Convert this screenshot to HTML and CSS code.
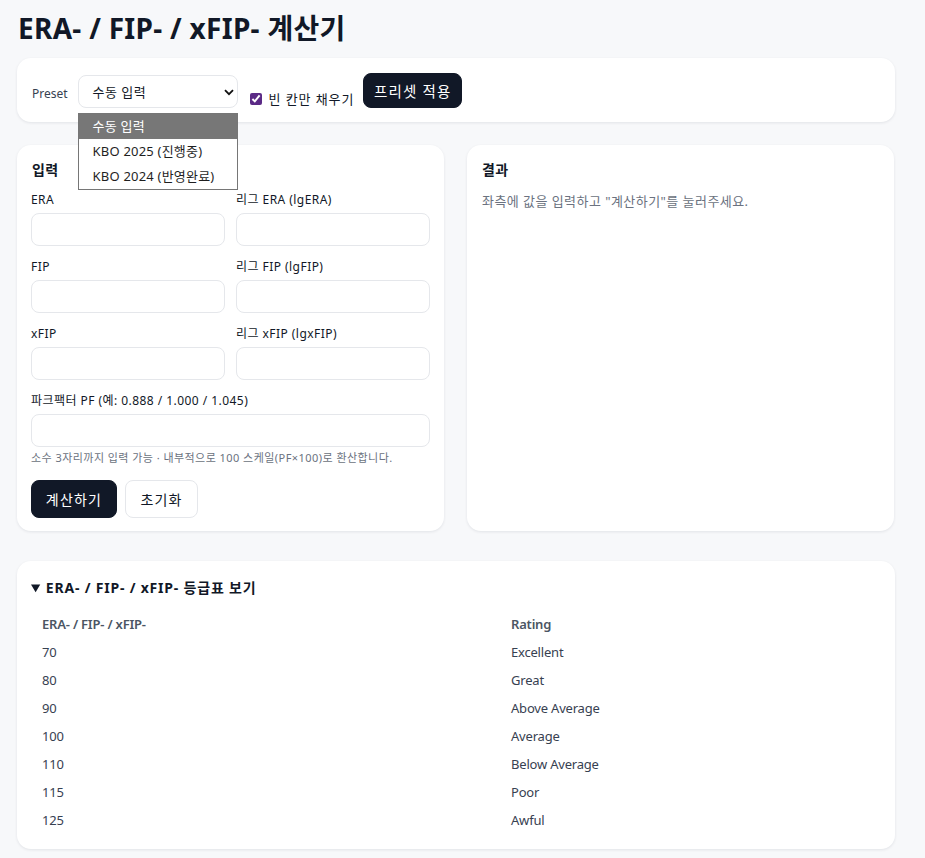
FILE: index.html
```html
<!DOCTYPE html>
<html lang="ko">
<head>
<meta charset="utf-8">
<title>ERA- / FIP- / xFIP- 계산기</title>
<link rel="stylesheet" href="styles.css">
</head>
<body>
<div class="page">
  <h1 class="title">ERA- / FIP- / xFIP- 계산기</h1>

  <div class="card preset-card">
    <span class="preset-label">Preset</span>
    <div class="select-wrap">
      <div class="select">
        <span>수동 입력</span>
        <svg class="chev" width="10" height="7" viewBox="0 0 10 7"><path d="M1 1.2 L5 5.2 L9 1.2" fill="none" stroke="#111" stroke-width="1.8"/></svg>
      </div>
      <ul class="dropdown">
        <li class="active">수동 입력</li>
        <li>KBO 2025 (진행중)</li>
        <li>KBO 2024 (반영완료)</li>
      </ul>
    </div>
    <label class="check-label"><input type="checkbox" class="check" checked> 빈 칸만 채우기</label>
    <button class="btn btn-dark btn-preset">프리셋 적용</button>
  </div>

  <div class="main-grid">
    <div class="card panel">
      <h2 class="panel-title">입력</h2>
      <div class="field-grid">
        <div class="field"><label class="field-label">ERA</label><input class="input" type="text"></div>
        <div class="field"><label class="field-label">리그 ERA (lgERA)</label><input class="input" type="text"></div>
        <div class="field"><label class="field-label">FIP</label><input class="input" type="text"></div>
        <div class="field"><label class="field-label">리그 FIP (lgFIP)</label><input class="input" type="text"></div>
        <div class="field"><label class="field-label">xFIP</label><input class="input" type="text"></div>
        <div class="field"><label class="field-label">리그 xFIP (lgxFIP)</label><input class="input" type="text"></div>
        <div class="field field-full"><label class="field-label">파크팩터 PF (예: 0.888 / 1.000 / 1.045)</label><input class="input" type="text"></div>
      </div>
      <p class="hint">소수 3자리까지 입력 가능 · 내부적으로 100 스케일(PF×100)로 환산합니다.</p>
      <div class="actions">
        <button class="btn btn-dark btn-calc">계산하기</button>
        <button class="btn btn-light btn-reset">초기화</button>
      </div>
    </div>
    <div class="card panel">
      <h2 class="panel-title">결과</h2>
      <p class="result-text">좌측에 값을 입력하고 "계산하기"를 눌러주세요.</p>
    </div>
  </div>

  <details class="card grade-card" open>
    <summary class="grade-summary">ERA- / FIP- / xFIP- 등급표 보기</summary>
    <table class="grade-table">
      <thead>
        <tr><th class="col-a">ERA- / FIP- / xFIP-</th><th>Rating</th></tr>
      </thead>
      <tbody>
        <tr><td>70</td><td>Excellent</td></tr>
        <tr><td>80</td><td>Great</td></tr>
        <tr><td>90</td><td>Above Average</td></tr>
        <tr><td>100</td><td>Average</td></tr>
        <tr><td>110</td><td>Below Average</td></tr>
        <tr><td>115</td><td>Poor</td></tr>
        <tr><td>125</td><td>Awful</td></tr>
      </tbody>
    </table>
  </details>
</div>
</body>
</html>
```

FILE: styles.css
```css
* { box-sizing: border-box; }
html, body { margin: 0; padding: 0; }
body {
  background: #f7f8fa;
  font-family: "Noto Sans", "Noto Sans CJK KR", sans-serif;
  color: #111827;
  letter-spacing: 0.45px;
}
.page {
  width: 878px;
  margin-left: 17px;
  padding-bottom: 8px;
}
.title {
  margin: 8px 0 10px 1px;
  font-size: 28px;
  line-height: 40px;
  font-weight: 700;
  color: #111827;
  letter-spacing: 0.3px;
}
.card {
  background: #fff;
  border-radius: 14px;
  box-shadow: 0 1px 3px rgba(15, 23, 42, 0.09);
}
.preset-card {
  height: 64px;
  display: flex;
  align-items: flex-end;
  gap: 12px;
  padding: 0 15px 14px;
  position: relative;
  z-index: 2;
}
.preset-label {
  font-size: 12px;
  line-height: 33px;
  color: #374151;
  letter-spacing: 0;
  margin-bottom: -2px;
  margin-right: -2px;
}
.select-wrap { position: relative; }
.select {
  width: 160px;
  height: 33px;
  border: 1px solid #e5e7eb;
  border-radius: 8px;
  display: flex;
  align-items: center;
  justify-content: space-between;
  padding: 0 3px 0 14px;
  font-size: 13px;
  color: #111827;
  background: #fff;
}
.chev { margin-top: 1px; }
.dropdown {
  position: absolute;
  left: 0;
  top: 38px;
  width: 160px;
  margin: 0;
  padding: 0;
  list-style: none;
  background: #fff;
  border: 1px solid #767676;
}
.dropdown li {
  height: 25px;
  line-height: 25px;
  padding-left: 14px;
  font-size: 13px;
  color: #1f1f1f;
  letter-spacing: 0.2px;
}
.dropdown li.active {
  background: #777777;
  color: #fff;
}
.check-label {
  display: flex;
  align-items: center;
  gap: 7px;
  font-size: 13px;
  line-height: 18px;
  color: #111827;
  letter-spacing: 0.9px;
}
.check {
  margin: 0;
  width: 12px;
  height: 12px;
  accent-color: #5b2a86;
}
.btn {
  font-family: inherit;
  border-radius: 8px;
  font-size: 14px;
  cursor: pointer;
  letter-spacing: 1.2px;
}
.btn-dark {
  background: #111827;
  color: #fff;
  border: 1px solid #111827;
}
.btn-light {
  background: #fff;
  color: #111827;
  border: 1px solid #e5e7eb;
}
.btn-preset {
  width: 99px;
  height: 35px;
  padding: 0;
  font-size: 14.5px;
  margin-left: -3px;
}
.main-grid {
  display: grid;
  grid-template-columns: 427px 427px;
  gap: 23px;
  margin-top: 23px;
}
.panel {
  padding: 15px 14px 13px;
}
.panel-title {
  margin: 0 0 12px 1px;
  font-size: 14px;
  line-height: 20px;
  font-weight: 700;
  color: #111827;
}
.field-grid {
  display: grid;
  grid-template-columns: 1fr 1fr;
  column-gap: 11px;
  row-gap: 13px;
}
.field { display: flex; flex-direction: column; }
.field-full { grid-column: 1 / -1; }
.field-label {
  font-size: 12px;
  line-height: 16px;
  color: #111827;
  margin-bottom: 5px;
}
.input {
  height: 33px;
  border: 1px solid #e5e7eb;
  border-radius: 8px;
  background: #fff;
  width: 100%;
}
.hint {
  margin: 4px 0 0;
  font-size: 11px;
  line-height: 14px;
  color: #6b7280;
}
.actions {
  display: flex;
  gap: 8px;
  margin-top: 15px;
}
.btn-calc { width: 86px; height: 38px; padding: 0; }
.btn-reset { width: 73px; height: 38px; padding: 0; }
.result-text {
  margin: 0 0 0 1px;
  font-size: 13px;
  line-height: 18px;
  color: #6b7280;
}
.grade-card {
  display: block;
  margin-top: 30px;
  padding: 17px 14px 15px;
}
.grade-summary {
  font-size: 14px;
  line-height: 20px;
  font-weight: 700;
  color: #111827;
  cursor: pointer;
  letter-spacing: 0.8px;
}
.grade-table {
  margin-top: 12px;
  width: 849px;
  border-collapse: collapse;
  font-size: 13px;
  letter-spacing: -0.2px;
}
.grade-table th, .grade-table td {
  height: 28px;
  padding: 0 11px;
  text-align: left;
}
.grade-table th {
  font-weight: 600;
  color: #4b5563;
}
.grade-table td { color: #374151; }
.col-a { width: 469px; }
```
